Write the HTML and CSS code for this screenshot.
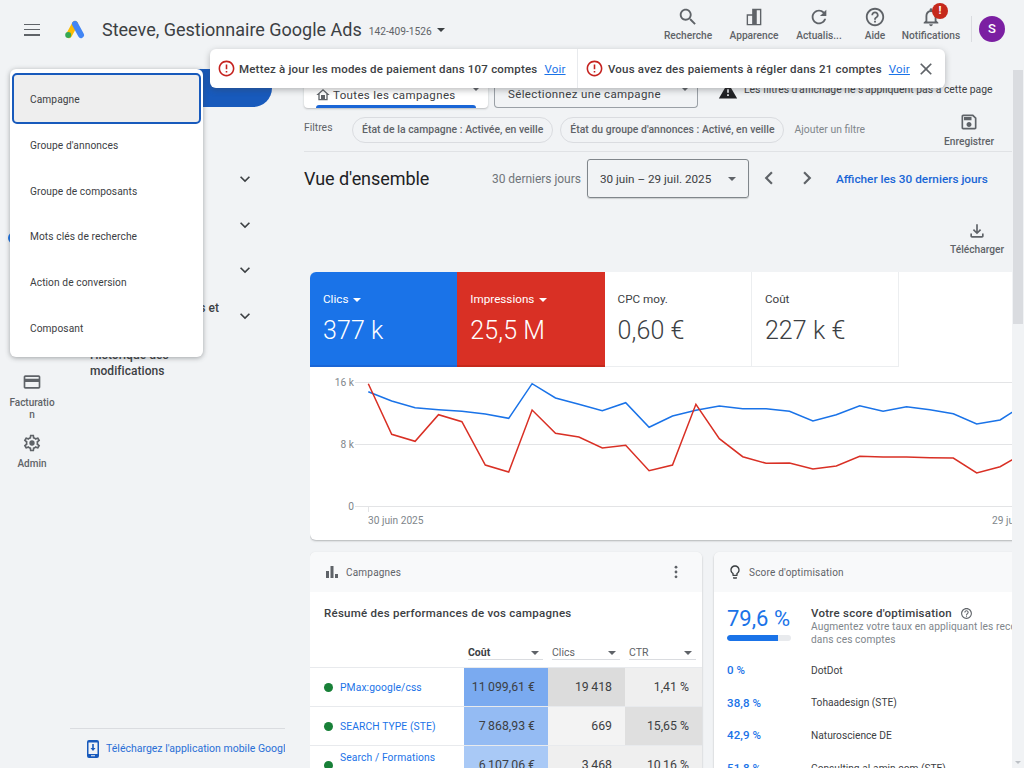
FILE: index.html
```html
<!DOCTYPE html>
<html lang="fr">
<head>
<meta charset="utf-8">
<title>Google Ads</title>
<link rel="stylesheet" href="styles.css">
</head>
<body>
<div class="app">
  <header class="topbar">
    <button class="burger" aria-label="Menu"><span></span><span></span><span></span></button>
    <svg class="logo" viewBox="0 0 20 19"><line x1="4" y1="15" x2="10" y2="4" stroke="#fbbc04" stroke-width="6" stroke-linecap="round"/><line x1="10" y1="4" x2="16" y2="15" stroke="#4285f4" stroke-width="6" stroke-linecap="round"/><circle cx="3.2" cy="15" r="3" fill="#34a853"/></svg>
    <h1 class="acct-name">Steeve, Gestionnaire Google Ads</h1>
    <span class="acct-id">142-409-1526</span>
    <span class="caret acct-caret"></span>
    <nav class="tools">
      <div class="tool tool-search"><svg class="tool-ic" viewBox="0 0 24 24"><path d="M15.5 14h-.79l-.28-.27C15.41 12.59 16 11.11 16 9.5 16 5.91 13.09 3 9.5 3S3 5.91 3 9.5 5.91 16 9.5 16c1.61 0 3.09-.59 4.23-1.57l.27.28v.79l5 4.99L20.49 19l-4.99-5zm-6 0C7.01 14 5 11.99 5 9.5S7.01 5 9.5 5 14 7.01 14 9.5 11.99 14 9.5 14z"/></svg><span>Recherche</span></div>
      <div class="tool tool-look"><svg class="tool-ic" viewBox="0 0 24 24"><path fill-rule="evenodd" d="M4 21V9h6V3h10v18zM5.500 19.500h4.500v-9H5.500zM15 19.500h3.500v-15H15z"/></svg><span>Apparence</span></div>
      <div class="tool tool-refresh"><svg class="tool-ic" viewBox="0 0 24 24"><path d="M17.650 6.350C16.200 4.900 14.210 4 12 4c-4.420 0-7.990 3.580-7.990 8s3.570 8 7.990 8c3.730 0 6.840-2.550 7.730-6h-2.080c-.82 2.330-3.040 4-5.650 4-3.310 0-6-2.690-6-6s2.690-6 6-6c1.660 0 3.140.69 4.220 1.780L13 11h7V4l-2.350 2.350z"/></svg><span>Actualis...</span></div>
      <div class="tool tool-help"><svg class="tool-ic" viewBox="0 0 24 24"><path d="M11 18h2v-2h-2v2zm1-16C6.480 2 2 6.480 2 12s4.480 10 10 10 10-4.480 10-10S17.520 2 12 2zm0 18c-4.410 0-8-3.590-8-8s3.590-8 8-8 8 3.590 8 8-3.590 8-8 8zm0-14c-2.210 0-4 1.790-4 4h2c0-1.100.9-2 2-2s2 .9 2 2c0 2-3 1.750-3 5h2c0-2.250 3-2.500 3-5 0-2.210-1.790-4-4-4z"/></svg><span>Aide</span></div>
      <div class="tool tool-notif"><svg class="tool-ic" viewBox="0 0 24 24"><path d="M12 22c1.100 0 2-.9 2-2h-4c0 1.100.9 2 2 2zm6-6v-5c0-3.070-1.630-5.640-4.500-6.320V4c0-.83-.67-1.500-1.500-1.500s-1.500.67-1.500 1.500v.68C7.640 5.360 6 7.920 6 11v5l-2 2v1h16v-1l-2-2zm-2 1H8v-6c0-2.480 1.510-4.500 4-4.500s4 2.020 4 4.500v6z"/></svg><span>Notifications</span><b class="badge">!</b></div>
    </nav>
    <div class="top-sep"></div>
    <div class="avatar">S</div>
  </header>

  <div class="shell">
    <aside class="rail">
      <span class="rail-ring"></span>
      <div class="rail-item rail-bill"><svg class="rail-ic" viewBox="0 0 24 24"><path d="M20 4H4c-1.110 0-1.990.89-1.990 2L2 18c0 1.110.89 2 2 2h16c1.110 0 2-.89 2-2V6c0-1.110-.89-2-2-2zm0 14H4v-6h16v6zm0-10H4V6h16v2z"/></svg><span>Facturatio<br>n</span></div>
      <div class="rail-item"><svg class="rail-ic" viewBox="0 0 24 24"><path d="M19.430 12.980c.04-.32.07-.64.07-.98 0-.34-.03-.66-.07-.98l2.110-1.650c.19-.15.24-.42.12-.64l-2-3.460c-.09-.16-.26-.25-.44-.25-.06 0-.12.01-.17.03l-2.490 1c-.52-.4-1.080-.73-1.690-.98l-.38-2.650C14.460 2.180 14.250 2 14 2h-4c-.25 0-.46.18-.49.42l-.38 2.650c-.61.25-1.170.59-1.690.98l-2.490-1c-.06-.02-.12-.03-.18-.03-.17 0-.34.09-.43.25l-2 3.460c-.13.22-.07.49.12.64l2.110 1.650c-.04.32-.07.65-.07.98 0 .33.03.66.07.98l-2.110 1.650c-.19.15-.24.42-.12.64l2 3.460c.09.16.26.25.44.25.06 0 .12-.01.17-.03l2.490-1c.52.4 1.080.73 1.690.98l.38 2.650c.03.24.24.42.49.42h4c.25 0 .46-.18.49-.42l.38-2.650c.61-.25 1.170-.59 1.690-.98l2.490 1c.06.02.12.03.18.03.17 0 .34-.09.43-.25l2-3.460c.12-.22.07-.49-.12-.64l-2.110-1.650zm-1.980-1.710c.04.31.05.52.05.73 0 .21-.02.43-.05.73l-.14 1.130.89.7 1.080.84-.7 1.210-1.270-.51-1.040-.42-.9.68c-.43.32-.84.56-1.250.73l-1.060.43-.16 1.130-.2 1.350h-1.400l-.19-1.350-.16-1.130-1.060-.43c-.43-.18-.83-.41-1.230-.71l-.91-.7-1.060.43-1.270.51-.7-1.210 1.080-.84.89-.7-.14-1.130c-.03-.31-.05-.54-.05-.74s.02-.43.05-.73l.14-1.130-.89-.7-1.080-.84.7-1.210 1.270.51 1.040.42.9-.68c.43-.32.84-.56 1.250-.73l1.060-.43.16-1.130.2-1.350h1.390l.19 1.350.16 1.130 1.060.43c.43.18.83.41 1.230.71l.91.7 1.060-.43 1.270-.51.7 1.210-1.070.85-.89.7.14 1.130z"/><circle cx="12" cy="12" r="3.200"/></svg><span>Admin</span></div>
    </aside>

    <nav class="sidenav">
      <div class="nav-pill">Aperçu</div>
      <div class="nav-plain">Recommandations</div>
      <div class="nav-plain">Insights et rapports</div>
      <div class="nav-row"><span>Campagnes</span><svg class="chev" viewBox="0 0 24 24"><path d="M7.410 8.590L12 13.170l4.590-4.580L18 10l-6 6-6-6 1.410-1.410z"/></svg></div>
      <div class="nav-row"><span>Groupes d'annonces</span><svg class="chev" viewBox="0 0 24 24"><path d="M7.410 8.590L12 13.170l4.590-4.580L18 10l-6 6-6-6 1.410-1.410z"/></svg></div>
      <div class="nav-row"><span>Annonces et composants</span><svg class="chev" viewBox="0 0 24 24"><path d="M7.410 8.590L12 13.170l4.590-4.580L18 10l-6 6-6-6 1.410-1.410z"/></svg></div>
      <div class="nav-row"><span>Audiences, mots clés et contenu</span><svg class="chev" viewBox="0 0 24 24"><path d="M7.410 8.590L12 13.170l4.590-4.580L18 10l-6 6-6-6 1.410-1.410z"/></svg></div>
      <div class="nav-hist">Historique des modifications</div>
      <div class="nav-foot">
        <svg class="phone" viewBox="0 0 12 18"><path fill-rule="evenodd" d="M2 0h8a2 2 0 0 1 2 2v14a2 2 0 0 1-2 2H2a2 2 0 0 1-2-2V2a2 2 0 0 1 2-2zM1.500 2.500v11.500h9V2.500zM4 15.200v1h4v-1zM5.200 4h1.600v4h1.700L6 11 3.500 8h1.700z"/></svg>
        <span class="foot-link">Téléchargez l'application mobile Google Ads</span>
      </div>
    </nav>

    <main class="main">
      <div class="pickers">
        <div class="picker picker-active">
          <svg class="home" viewBox="0 0 24 24"><path d="M12 5.690l5 4.500V18h-2v-6H9v6H7v-7.810l5-4.500M12 3L2 12h3v8h14v-8h3L12 3z"/></svg>
          <span>Toutes les campagnes</span><i class="picker-caret"></i><b class="picker-bar"></b>
        </div>
        <div class="picker picker-plain"><span>Sélectionnez une campagne</span><i class="picker-caret"></i></div>
        <div class="notice">
          <svg class="warn" viewBox="0 0 24 24"><path fill-rule="evenodd" d="M1 21h22L12 2 1 21zM13 18h-2v-2h2v2zm0-4h-2v-4h2v4z"/></svg>
          <span>Les filtres d'affichage ne s'appliquent pas à cette page</span>
        </div>
      </div>

      <div class="filters">
        <span class="filters-lbl">Filtres</span>
        <span class="chip">État de la campagne : Activée, en veille</span>
        <span class="chip">État du groupe d'annonces : Activé, en veille</span>
        <span class="add-filter">Ajouter un filtre</span>
        <div class="save"><svg class="ic20" viewBox="0 0 24 24"><path d="M17 3H5c-1.110 0-2 .9-2 2v14c0 1.100.89 2 2 2h14c1.100 0 2-.9 2-2V7l-4-4zm2 16H5V5h11.170L19 7.830V19zm-7-7c-1.660 0-3 1.340-3 3s1.340 3 3 3 3-1.340 3-3-1.340-3-3-3zM6 6h9v4H6z"/></svg><span>Enregistrer</span></div>
      </div>

      <div class="overview">
        <h2>Vue d'ensemble</h2>
        <span class="range-lbl">30 derniers jours</span>
        <div class="range-box"><span>30 juin – 29 juil. 2025</span><i class="caret"></i></div>
        <svg class="nav-arrow arrow-l" viewBox="0 0 24 24"><path d="M15.410 7.410L14 6l-6 6 6 6 1.410-1.410L10.830 12z"/></svg>
        <svg class="nav-arrow arrow-r" viewBox="0 0 24 24"><path d="M10 6L8.590 7.410 13.170 12l-4.580 4.590L10 18l6-6z"/></svg>
        <a class="range-link">Afficher les 30 derniers jours</a>
      </div>

      <div class="dl"><svg class="ic20" viewBox="0 0 24 24"><path d="M18 15v3H6v-3H4v3c0 1.100.9 2 2 2h12c1.100 0 2-.9 2-2v-3h-2zm-1-4l-1.410-1.410L13 12.170V4h-2v8.170L8.410 9.590 7 11l5 5 5-5z"/></svg><span>Télécharger</span></div>

      <div class="clip">
        <section class="card chart-card">
          <div class="metrics">
            <div class="metric m-blue"><div class="m-label">Clics <i class="caret c-white"></i></div><div class="m-val">377 k</div></div>
            <div class="metric m-red"><div class="m-label">Impressions <i class="caret c-white"></i></div><div class="m-val">25,5 M</div></div>
            <div class="metric"><div class="m-label">CPC moy.</div><div class="m-val">0,60 €</div></div>
            <div class="metric"><div class="m-label">Coût</div><div class="m-val">227 k €</div></div>
          </div>
          <svg class="chart" viewBox="310 367 702 172" width="702" height="172">
            <g class="grid"><line x1="355" y1="382.500" x2="1012" y2="382.500"/><line x1="355" y1="444.500" x2="1012" y2="444.500"/><line x1="355" y1="506.500" x2="1012" y2="506.500"/><line x1="368.500" y1="506.500" x2="368.500" y2="512"/></g>
            <g class="axis"><text x="354" y="386" text-anchor="end">16 k</text><text x="354" y="448" text-anchor="end">8 k</text><text x="354" y="510" text-anchor="end">0</text><text x="368" y="524">30 juin 2025</text><text x="992" y="524">29 juil. 2025</text></g>
            <polyline class="ln-blue" points="368.300,391.700 391.700,401 415.100,407.700 438.500,409.700 461.900,411.300 485.300,414 508.700,418.300 532.100,383.700 555.500,398 578.900,404.300 602.300,410.700 625.700,402.700 649.100,427.300 672.500,416 695.900,410.300 719.300,406 742.700,408.700 766.100,408.700 789.500,411.300 812.900,421 836.300,414.700 859.700,405.700 883.100,411.300 906.500,406.700 929.900,409.700 953.300,413.700 976.700,424 1000.100,420 1023.500,405"/>
            <polyline class="ln-red" points="368.300,383.700 391.700,434.300 415.100,441.300 438.500,414.700 461.900,421.700 485.300,465 508.700,472 532.100,410 555.500,433.300 578.900,437 602.300,448 625.700,445.300 649.100,470.700 672.500,465 695.900,404.300 719.300,438.700 742.700,456.700 766.100,463.300 789.500,463 812.900,469 836.300,466 859.700,456.300 883.100,457 906.500,457 929.900,457.700 953.300,458 976.700,473 1000.100,466.700 1023.500,453.300"/>
          </svg>
        </section>

        <div class="cards">
          <section class="card card-camp">
            <div class="card-head">
              <svg class="head-ic" viewBox="0 0 14 14"><path d="M1 6h3v7H1zM5.500 1h3v12h-3zM10 9h3v4h-3z"/></svg>
              <span>Campagnes</span>
              <svg class="kebab" viewBox="0 0 4 16"><circle cx="2" cy="2.500" r="1.600"/><circle cx="2" cy="8" r="1.600"/><circle cx="2" cy="13.500" r="1.600"/></svg>
            </div>
            <h3 class="card-title">Résumé des performances de vos campagnes</h3>
            <div class="tbl-head">
              <span class="th th-bold">Coût<i class="caret"></i></span>
              <span class="th th-2">Clics<i class="caret"></i></span>
              <span class="th th-3">CTR<i class="caret"></i></span>
            </div>
            <div class="tr">
              <div class="camp"><i class="dot"></i><a>PMax:google/css</a></div>
              <div class="td h-b1">11&#8201;099,61 €</div><div class="td h-g1">19&#8201;418</div><div class="td h-g3">1,41 %</div>
            </div>
            <div class="tr">
              <div class="camp"><i class="dot"></i><a>SEARCH TYPE (STE)</a></div>
              <div class="td h-b2">7&#8201;868,93 €</div><div class="td h-g4">669</div><div class="td h-g2">15,65 %</div>
            </div>
            <div class="tr">
              <div class="camp"><i class="dot"></i><a>Search / Formations<br>Google Ads</a></div>
              <div class="td h-b3">6&#8201;107,06 €</div><div class="td h-g3">3&#8201;468</div><div class="td h-g3">10,16 %</div>
            </div>
          </section>

          <section class="card card-score">
            <div class="card-head">
              <svg class="head-ic bulb" viewBox="0 0 24 24"><path d="M9 21c0 .55.45 1 1 1h4c.55 0 1-.45 1-1v-1H9v1zm3-19C8.140 2 5 5.140 5 9c0 2.380 1.190 4.470 3 5.740V17c0 .55.45 1 1 1h6c.55 0 1-.45 1-1v-2.260c1.810-1.270 3-3.360 3-5.740 0-3.860-3.140-7-7-7zm2.850 11.100l-.85.6V16h-4v-2.300l-.85-.6C7.800 12.160 7 10.630 7 9c0-2.760 2.240-5 5-5s5 2.240 5 5c0 1.630-.8 3.160-2.150 4.100z"/></svg>
              <span>Score d'optimisation</span>
            </div>
            <div class="score-top">
              <div class="score-left">
                <div class="score-val">79,6 %</div>
                <div class="bar"><div class="bar-fill"></div></div>
              </div>
              <div class="score-text">
                <div class="score-h">Votre score d'optimisation <svg class="q" viewBox="0 0 24 24"><path d="M11 18h2v-2h-2v2zm1-16C6.480 2 2 6.480 2 12s4.480 10 10 10 10-4.480 10-10S17.520 2 12 2zm0 18c-4.410 0-8-3.590-8-8s3.590-8 8-8 8 3.590 8 8-3.590 8-8 8zm0-14c-2.210 0-4 1.790-4 4h2c0-1.100.9-2 2-2s2 .9 2 2c0 2-3 1.750-3 5h2c0-2.250 3-2.500 3-5 0-2.210-1.790-4-4-4z"/></svg></div>
                <p>Augmentez votre taux en appliquant les recommandations<br>dans ces comptes</p>
              </div>
            </div>
            <div class="acct"><b>0 %</b><span>DotDot</span></div>
            <div class="acct"><b>38,8 %</b><span>Tohaadesign (STE)</span></div>
            <div class="acct"><b>42,9 %</b><span>Naturoscience DE</span></div>
            <div class="acct"><b>51,8 %</b><span>Consulting.al-amin.com (STE)</span></div>
          </section>
        </div>
      </div>
    </main>

    <div class="scrollbar"><div class="thumb"></div><i class="sb-down"></i></div>
  </div>

  <div class="banner">
    <div class="ban-item ban-first">
      <svg class="err" viewBox="0 0 24 24"><path d="M11 15h2v2h-2zm0-8h2v6h-2zm.99-5C6.470 2 2 6.480 2 12s4.470 10 9.990 10C17.520 22 22 17.520 22 12S17.520 2 11.990 2zM12 20c-4.420 0-8-3.580-8-8s3.580-8 8-8 8 3.580 8 8-3.580 8-8 8z"/></svg>
      <span>Mettez à jour les modes de paiement dans 107 comptes</span><a>Voir</a>
    </div>
    <div class="ban-item ban-second">
      <svg class="err" viewBox="0 0 24 24"><path d="M11 15h2v2h-2zm0-8h2v6h-2zm.99-5C6.470 2 2 6.480 2 12s4.470 10 9.990 10C17.520 22 22 17.520 22 12S17.520 2 11.990 2zM12 20c-4.420 0-8-3.580-8-8s3.580-8 8-8 8 3.580 8 8-3.580 8-8 8z"/></svg>
      <span>Vous avez des paiements à régler dans 21 comptes</span><a>Voir</a>
    </div>
    <svg class="ban-x" viewBox="0 0 24 24"><path d="M19 6.410L17.590 5 12 10.590 6.410 5 5 6.410 10.590 12 5 17.590 6.410 19 12 13.410 17.590 19 19 17.590 13.410 12z"/></svg>
  </div>

  <div class="menu">
    <div class="menu-item selected">Campagne</div>
    <div class="menu-item">Groupe d'annonces</div>
    <div class="menu-item">Groupe de composants</div>
    <div class="menu-item">Mots clés de recherche</div>
    <div class="menu-item">Action de conversion</div>
    <div class="menu-item">Composant</div>
  </div>
</div>
</body>
</html>
```

FILE: styles.css
```css
* { box-sizing: border-box; }
html, body { margin: 0; padding: 0; height: 100%; overflow: hidden; }
body { font-family: Roboto, "Liberation Sans", sans-serif; color: #3c4043; background: #f1f3f5; }
svg { fill: currentColor; display: block; flex-shrink: 0; }
h1, h2, h3, p { margin: 0; font-weight: 400; }
i { display: block; }

.app { position: relative; width: 1024px; height: 768px; overflow: hidden; background: #f1f3f5; display: flex; flex-direction: column; }

.caret { display: block; width: 0; height: 0; border-left: 4px solid transparent; border-right: 4px solid transparent; border-top: 4px solid #5f6368; flex-shrink: 0; }

/* top bar */
.topbar { height: 60px; flex-shrink: 0; display: flex; align-items: center; position: relative; padding-left: 24px; }
.burger { width: 16px; height: 12px; padding: 0; border: 0; background: none; display: flex; flex-direction: column; justify-content: space-between; margin-top: -1px; }
.burger span { display: block; height: 1.500px; width: 16px; background: #5f6368; }
.logo { width: 20px; height: 19px; margin-left: 25px; margin-top: -1px; }
.acct-name { font-size: 18px; color: #3c4043; margin-left: 17px; margin-top: -2px; letter-spacing: 0; white-space: nowrap; }
.acct-id { font-size: 10.200px; color: #5f6368; margin-left: 7px; margin-top: 2px; }
.acct-caret { margin-left: 5px; margin-top: 0; border-top-color: #3c4043; }
.tools { margin-left: auto; display: flex; align-items: flex-start; height: 60px; padding-top: 6px; }
.tool { display: flex; flex-direction: column; align-items: center; font-size: 10.200px; font-weight: 500; color: #5f6368; position: relative; white-space: nowrap; }
.tool span { margin-top: 2px; }
.tool-ic { width: 22px; height: 22px; color: #5f6368; }
.tool-search { width: 66px; }
.tool-look { width: 66px; }
.tool-refresh { width: 64px; }
.tool-help { width: 48px; }
.tool-notif { width: 64px; }
.badge { position: absolute; top: -3px; left: 33px; width: 16px; height: 16px; border-radius: 50%; background: #c5291c; color: #fff; font-size: 11px; line-height: 16px; text-align: center; }
.top-sep { width: 1px; height: 26px; background: #dadce0; margin: -2px 7px 0 8px; }
.avatar { width: 26px; height: 26px; border-radius: 50%; background: #7b1fa2; color: #fff; font-size: 13px; font-weight: 500; line-height: 26px; text-align: center; margin: -2px 19px 0 0; }

/* shell */
.shell { flex: 1; min-height: 0; display: flex; }

.rail { width: 64px; flex-shrink: 0; position: relative; padding-top: 172px; }
.rail-ring { display: block; width: 12px; height: 12px; border: 2px solid #1a73e8; border-radius: 50%; margin-left: 8px; }
.rail-item { display: flex; flex-direction: column; align-items: center; font-size: 10px; font-weight: 500; color: #5f6368; line-height: 12px; text-align: center; }
.rail-bill { margin-top: 128px; margin-bottom: 12px; }
.rail-ic { width: 20px; height: 20px; margin-bottom: 5px; }

.sidenav { width: 221px; flex-shrink: 0; display: flex; flex-direction: column; font-size: 12px; font-weight: 500; color: #3c4043; letter-spacing: .05px; }
.nav-pill { margin: 9px 13px 0 -40px; height: 38px; background: #185abc; border-radius: 0 24px 24px 0; color: #fff; padding: 12px 0 0 66px; }
.nav-plain { height: 24.500px; padding-left: 26px; padding-top: 4px; }
.nav-row { height: 45.800px; display: flex; align-items: center; justify-content: space-between; padding: 0 30px 0 26px; }
.nav-row span { width: 134px; line-height: 16px; }
.chev { width: 20px; height: 20px; color: #3c4043; }
.nav-hist { width: 130px; margin-left: 26px; line-height: 16px; padding-top: 8px; font-size: 12px; }
.nav-foot { margin-top: auto; height: 40px; border-top: 1px solid #dadce0; margin-left: 6px; display: flex; align-items: center; padding-left: 17px; overflow: hidden; white-space: nowrap; color: #2a6fd6; font-weight: 400; font-size: 10.500px; letter-spacing: 0; }
.phone { width: 12px; height: 18px; margin-right: 7px; color: #185abc; }

.main { width: 727px; flex-shrink: 0; padding-left: 19px; min-width: 0; }
.pickers { display: flex; height: 48px; padding-top: 10px; align-items: stretch; }
.picker { position: relative; height: 38px; border-radius: 0 0 4px 4px; display: flex; align-items: flex-end; font-size: 11.500px; font-weight: 400; letter-spacing: .36px; color: #3c4043; padding-bottom: 6px; flex-shrink: 0; }
.picker-active { width: 184px; background: #fff; padding-left: 11px; box-shadow: 0 1px 2px rgba(60,64,67,.3); }
.picker-plain { width: 204px; margin-left: 6px; padding-left: 13px; border: 1px solid #9aa0a6; border-top: 0; background: #f1f3f5; }
.home { width: 16px; height: 16px; margin-right: 2px; margin-bottom: -1px; color: #5f6368; }
.picker-caret { position: absolute; right: 9px; top: 18px; width: 0; height: 0; border-left: 3px solid transparent; border-right: 3px solid transparent; border-top: 3px solid #5f6368; }
.picker-bar { position: absolute; left: 12px; right: 12px; bottom: 0; height: 3px; background: #1a66d6; border-radius: 3px 3px 0 0; }
.notice { display: flex; align-items: flex-start; margin-left: 20px; font-size: 10.400px; color: #3c4043; white-space: nowrap; padding-top: 13px; }
.warn { width: 20px; height: 20px; margin-right: 6px; margin-top: -2px; color: #202124; }

.filters { display: flex; align-items: center; height: 44px; border-bottom: 1px solid #e0e2e5; position: relative; width: 708px; }
.filters-lbl { font-size: 10.400px; color: #5f6368; width: 48px; margin-top: -5px; }
.chip { height: 26px; border: 1px solid #dadce0; border-radius: 13px; padding: 0 9px; font-size: 10.400px; font-weight: 500; letter-spacing: .03px; color: #5f6368; line-height: 24px; margin-right: 7px; white-space: nowrap; }
.add-filter { font-size: 10.400px; color: #80868b; margin-left: 3px; }
.save { margin-left: auto; margin-right: 18px; display: flex; flex-direction: column; align-items: center; font-size: 10.200px; font-weight: 500; color: #5f6368; }
.ic20 { width: 20px; height: 20px; color: #5f6368; margin-bottom: 4px; }

.overview { display: flex; align-items: center; height: 52px; width: 708px; }
.overview h2 { font-size: 18px; color: #202124; width: 188px; letter-spacing: -.05px; }
.range-lbl { font-size: 12px; color: #70757a; width: 95px; white-space: nowrap; margin-top: 1px; letter-spacing: -.03px; }
.range-box { width: 162px; height: 39px; border: 1px solid #80868b; border-radius: 3px; display: flex; align-items: center; justify-content: space-between; padding: 1px 12px 0; font-size: 11.700px; color: #3c4043; box-shadow: 0 1px 1px rgba(60,64,67,.2); }
.nav-arrow { width: 26px; height: 26px; color: #5f6368; }
.arrow-l { margin-left: 7px; }
.arrow-r { margin-left: 12px; }
.range-link { margin-left: 16px; font-size: 11.800px; font-weight: 500; color: #1a66d6; white-space: nowrap; margin-top: 1px; }

.dl { width: 700px; height: 68px; display: flex; flex-direction: column; align-items: flex-end; padding-top: 17px; font-size: 10.200px; font-weight: 500; color: #5f6368; }
.dl .ic20 { margin-right: 17px; margin-bottom: 3px; }

.clip { width: 702px; margin-left: 6px; overflow: hidden; padding-bottom: 20px; }
.card { background: #fff; border-radius: 6px 0 0 6px; box-shadow: 0 1px 2px rgba(60,64,67,.35); }
.chart-card { width: 740px; height: 268px; overflow: hidden; }
.metrics { display: flex; height: 95px; }
.metric { width: 147.300px; height: 95px; border-right: 1px solid #eceef0; border-bottom: 1px solid #eceef0; padding: 20px 13px 0; color: #3c4043; }
.m-blue { background: #1a73e8; color: #fff; border: 0; border-bottom: 2px solid #1a66d6; }
.m-red { background: #d93025; color: #fff; border: 0; border-bottom: 2px solid #c5291c; }
.m-label { font-size: 11.700px; display: flex; align-items: center; gap: 5px; height: 14px; }
.c-white { border-top-color: #fff; margin-top: 1px; }
.m-val { font-size: 25px; font-weight: 300; line-height: 30px; margin-top: 10px; letter-spacing: .1px; }
.chart { overflow: hidden; }
.grid line { stroke: #e3e4e6; stroke-width: 1; }
.axis text { font-family: Roboto, sans-serif; font-size: 10.200px; fill: #80868b; }
.ln-blue, .ln-red { fill: none; stroke-width: 1.500px; }
.ln-blue { stroke: #1a73e8; }
.ln-red { stroke: #d93025; }

.cards { display: flex; gap: 12px; margin-top: 12px; align-items: flex-start; }
.card-camp { width: 392px; height: 240px; flex-shrink: 0; border-radius: 6px; overflow: hidden; }
.card-score { width: 340px; height: 240px; flex-shrink: 0; overflow: hidden; }
.card-head { height: 40px; background: #f8f9fa; display: flex; align-items: center; padding-left: 15px; font-size: 10px; color: #5f6368; letter-spacing: .2px; position: relative; }
.head-ic { width: 14px; height: 14px; color: #5f6368; margin-right: 7px; }
.bulb { width: 16px; height: 16px; margin-right: 6px; color: #3c4043; margin-left: -2px; }
.kebab { width: 4px; height: 14px; color: #5f6368; margin-left: auto; margin-right: 24px; }
.card-title { font-size: 11.500px; font-weight: 500; color: #3c4043; padding: 14px 0 0 14px; letter-spacing: .25px; height: 50px; }
.tbl-head { display: flex; height: 25px; padding-left: 158px; }
.th { width: 75px; height: 18px; display: flex; align-items: center; justify-content: space-between; font-size: 10.500px; color: #5f6368; border-bottom: 1px solid #dadce0; padding: 4px 4px 0 0; }
.th .caret { border-left-width: 4px; border-right-width: 4px; }
.th-bold { font-weight: 700; color: #3c4043; }
.th-2 { margin-left: 9px; width: 68px; }
.th-3 { margin-left: 9px; width: 67px; }
.tr { display: flex; height: 39px; border-top: 1px solid #e8eaed; }
.camp { width: 154px; padding-left: 14px; display: flex; align-items: center; font-size: 10.300px; line-height: 15px; color: #1a73e8; letter-spacing: .1px; }
.dot { width: 9px; height: 9px; border-radius: 50%; background: #188038; margin-right: 7px; flex-shrink: 0; }
.td { width: 77px; display: flex; align-items: center; justify-content: flex-end; padding-right: 13px; font-size: 12.300px; color: #3c4043; }
.tr .td:nth-child(2) { width: 84px; }
.h-b1 { background: #7aaaf0; }
.h-b2 { background: #94bbf3; }
.h-b3 { background: #a9c9f6; }
.h-g1 { background: #dcdcdc; }
.h-g2 { background: #dfdfdf; }
.h-g3 { background: #efefef; }
.h-g4 { background: #f3f3f3; }

.score-top { display: flex; padding: 14px 0 0 13px; height: 62px; }
.score-left { width: 84px; flex-shrink: 0; }
.score-val { font-size: 22px; line-height: 26px; color: #1a73e8; }
.bar { width: 64px; height: 6px; background: #e8eaed; border-radius: 3px; margin-top: 3px; overflow: hidden; }
.bar-fill { width: 79.600%; height: 6px; background: #1a73e8; border-radius: 3px 0 0 3px; }
.score-h { display: flex; align-items: center; gap: 6px; font-size: 11.500px; font-weight: 500; color: #3c4043; letter-spacing: .25px; }
.q { width: 13px; height: 13px; color: #5f6368; margin-left: 2px; }
.score-text p { font-size: 10.200px; line-height: 13px; color: #80868b; letter-spacing: .1px; white-space: nowrap; margin-top: 0; }
.acct { display: flex; height: 32.600px; align-items: center; padding-left: 13px; font-size: 10.200px; color: #3c4043; }
.acct b { width: 84px; font-size: 11.500px; font-weight: 500; color: #1a73e8; letter-spacing: .1px; }

.scrollbar { width: 12px; flex-shrink: 0; padding: 10px 1px 0; position: relative; }
.thumb { height: 254px; background: #dadce0; }
.sb-down { position: absolute; left: 3px; bottom: 4px; width: 0; height: 0; border-left: 3px solid transparent; border-right: 3px solid transparent; border-top: 3px solid #bdc1c6; }

/* overlays */
.banner { position: absolute; left: 210px; top: 49px; width: 735px; height: 39px; background: #fff; border-radius: 6px; box-shadow: 0 2px 6px rgba(60,64,67,.35); display: flex; align-items: center; font-size: 11.500px; font-weight: 500; color: #3c4043; letter-spacing: .2px; white-space: nowrap; }
.ban-item { display: flex; align-items: center; height: 39px; }
.ban-first { width: 368px; padding-left: 7px; border-right: 1px solid #e8eaed; }
.ban-second { padding-left: 7px; }
.err { width: 19px; height: 19px; color: #c5221f; margin-right: 3px; }
.ban-second .err { margin-right: 4px; }
.banner a { color: #1a73e8; text-decoration: underline; margin-left: 7px; font-weight: 400; }
.ban-x { width: 20px; height: 20px; color: #5f6368; position: absolute; right: 9px; top: 10px; }

.menu { position: absolute; left: 10px; top: 69px; width: 193px; height: 288px; background: #fff; border-radius: 6px; box-shadow: 0 1px 5px rgba(60,64,67,.45); padding: 4px 2px 0; }
.menu-item { height: 45.800px; display: flex; align-items: center; padding-left: 18px; font-size: 10.200px; color: #3c4043; letter-spacing: .08px; }
.selected { height: 51px; background: #eeeeee; border: 2px solid #185abc; border-radius: 5px; padding: 1px 0 0 16px; margin-bottom: -1.700px; }
```
